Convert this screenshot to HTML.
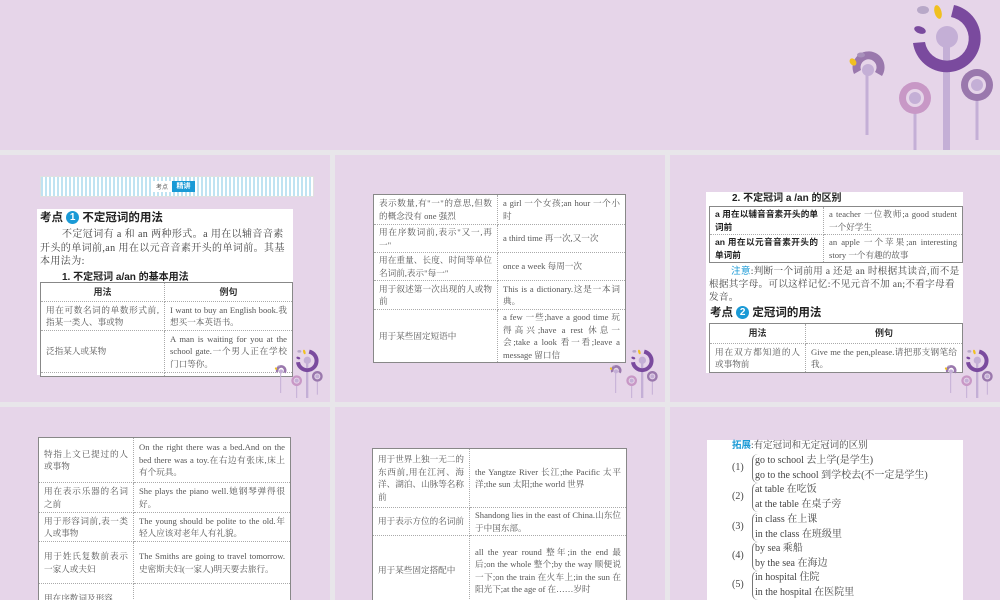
<!DOCTYPE html>
<html><head><meta charset="utf-8"><style>
*{margin:0;padding:0;box-sizing:border-box}
body{width:1000px;height:600px;background:#e8e6ea;position:relative;overflow:hidden;font-family:"Liberation Serif","Noto Serif CJK SC",serif;color:#444}
.s{position:absolute;background:#e6d5e9;overflow:hidden}
.abs{position:absolute}
.w{position:absolute;background:#fff}
table{border-collapse:collapse;position:absolute;background:#fff;font-size:8.6px;line-height:12.5px;color:#555}
td{border:1px dotted #aaa;padding:1px 5px;vertical-align:middle;text-align:justify}
table.t{border:1px solid #888}
th{font-family:"Liberation Sans","Noto Sans CJK SC",sans-serif;font-weight:bold;font-size:9px;border:1px dotted #aaa;color:#333}
.h{font-family:"Liberation Sans","Noto Sans CJK SC",sans-serif;font-weight:bold;color:#222}
.num{display:inline-block;width:13px;height:13px;border-radius:50%;background:#1a9ad6;color:#fff;text-align:center;line-height:13px;font-size:10px;vertical-align:1px}
p{font-size:10px;line-height:13.5px;color:#444}
.deco{position:absolute}
.g{position:absolute;left:62px;font-size:10px;line-height:14.5px;color:#444}
.g .l{position:absolute;left:0;top:7px}
.g .b{position:absolute;left:20px;top:0;border-left:1px solid #777;border-radius:6px 0 0 6px;padding-left:2px;white-space:nowrap;width:220px}
</style></head><body>
<svg width="0" height="0" style="position:absolute"><defs>
<g id="fl">
<rect x="45.5" y="70" width="3" height="65" fill="#c4afd6"/>
<path d="M34 74 A16 16 0 1 1 62 76 L55 72 A8 8 0 1 0 41 70 Z" fill="#9a78ad"/>
<circle cx="48" cy="70" r="6" fill="#c4afd6"/>
<ellipse cx="33" cy="62" rx="3" ry="4" fill="#f0c020" transform="rotate(-40 33 62)"/>
<ellipse cx="41" cy="55" rx="4" ry="2.5" fill="#a890bb"/>
<rect x="93.5" y="98" width="3" height="52" fill="#c4afd6"/>
<circle cx="95" cy="98" r="16" fill="#c898c6"/><circle cx="95" cy="98" r="9" fill="#e6d5e9"/><circle cx="95" cy="98" r="6" fill="#c4afd6"/>
<rect x="155.5" y="85" width="3" height="55" fill="#c4afd6"/>
<circle cx="157" cy="85" r="16" fill="#9a78ad"/><circle cx="157" cy="85" r="9" fill="#e6d5e9"/><circle cx="157" cy="85" r="6" fill="#c4afd6"/>
<rect x="123" y="37" width="7" height="113" fill="#c4afd6"/>
<path d="M93 43 A34 34 0 1 0 134 5 L131 17 A22 22 0 1 1 105 42 Z" fill="#7a4a9e"/>
<circle cx="127" cy="37" r="11" fill="#c4afd6"/>
<ellipse cx="118" cy="12" rx="3.5" ry="7" fill="#f0c020" transform="rotate(-15 118 12)"/>
<ellipse cx="103" cy="10" rx="6" ry="4" fill="#b8a8c8"/>
<ellipse cx="100" cy="30" rx="6" ry="3.5" fill="#7a4a9e" transform="rotate(20 100 30)"/>
</g></defs></svg>

<div class="s" style="left:0;top:0;width:1000px;height:150px">
<svg class="deco" style="left:820px;top:0" width="180" height="150" viewBox="0 0 180 150"><use href="#fl"/></svg>
</div>

<!-- slide 1 -->
<div class="s" style="left:0;top:155px;width:330px;height:247px">
<div class="w" style="left:40px;top:21px;width:274px;height:21px;background:repeating-linear-gradient(90deg,#bfe3f2 0 2px,#fff 2px 4px);border:1px solid #e0e0e0"></div>
<div class="abs" style="left:153px;top:26px;width:42px;height:11px;background:#fff"></div>
<div class="abs h" style="left:156px;top:27px;font-size:6px;color:#555;font-weight:normal">考点</div>
<div class="abs h" style="left:172px;top:26px;width:23px;height:11px;background:#1a9ad6;color:#fff;font-size:7px;text-align:center;line-height:11px">精讲</div>
<div class="w" style="left:37px;top:54px;width:256px;height:166px"></div>
<div class="abs h" style="left:40px;top:55px;font-size:11.5px;line-height:16px">考点 <span class="num">1</span> 不定冠词的用法</div>
<p class="abs" style="left:40px;top:73px;width:252px;text-indent:22px;letter-spacing:.4px">不定冠词有 a 和 an 两种形式。a 用在以辅音音素开头的单词前,an 用在以元音音素开头的单词前。其基本用法为:</p>
<div class="abs h" style="left:62px;top:113px;font-size:10px">1. 不定冠词 a/an 的基本用法</div>
<table class="t" style="left:40px;top:127px;width:253px">
<tr style="height:19px"><th style="width:124px">用法</th><th>例句</th></tr>
<tr style="height:29px"><td>用在可数名词的单数形式前,指某一类人、事或物</td><td>I want to buy an English book.我想买一本英语书。</td></tr>
<tr style="height:42px"><td>泛指某人或某物</td><td>A man is waiting for you at the school gate.一个男人正在学校门口等你。</td></tr>
<tr style="height:4px"><td></td><td></td></tr>
</table>
<svg class="deco" style="left:265px;top:193px" width="60" height="50" viewBox="0 0 180 150"><use href="#fl"/></svg>
</div>

<!-- slide 2 -->
<div class="s" style="left:335px;top:155px;width:330px;height:247px">
<table class="t" style="left:38px;top:39px;width:253px">
<tr style="height:30px"><td style="width:124px">表示数量,有"一"的意思,但数的概念没有 one 强烈</td><td>a girl 一个女孩;an hour 一个小时</td></tr>
<tr style="height:28px"><td>用在序数词前,表示"又一,再一"</td><td>a third time 再一次,又一次</td></tr>
<tr style="height:28px"><td>用在重量、长度、时间等单位名词前,表示"每一"</td><td>once a week 每周一次</td></tr>
<tr style="height:29px"><td>用于叙述第一次出现的人或物前</td><td>This is a dictionary.这是一本词典。</td></tr>
<tr style="height:53px"><td>用于某些固定短语中</td><td>a few 一些;have a good time 玩得高兴;have a rest 休息一会;take a look 看一看;leave a message 留口信</td></tr>
</table>
<svg class="deco" style="left:265px;top:193px" width="60" height="50" viewBox="0 0 180 150"><use href="#fl"/></svg>
</div>

<!-- slide 3 -->
<div class="s" style="left:670px;top:155px;width:330px;height:247px">
<div class="w" style="left:36px;top:37px;width:257px;height:181px"></div>
<div class="abs h" style="left:62px;top:37px;font-size:10px;line-height:14px">2. 不定冠词 a /an 的区别</div>
<table class="t" style="left:39px;top:51px;width:254px">
<tr style="height:28px"><td style="width:114px" class="h">a 用在以辅音音素开头的单词前</td><td>a teacher 一位教师;a good student 一个好学生</td></tr>
<tr style="height:28px"><td class="h">an 用在以元音音素开头的单词前</td><td>an apple 一个苹果;an interesting story 一个有趣的故事</td></tr>
</table>
<p class="abs" style="left:39px;top:110px;width:254px;text-indent:22px;letter-spacing:.3px;font-size:9.6px;line-height:13px"><span style="color:#1a9ad6;font-family:'Liberation Sans','Noto Sans CJK SC',sans-serif">注意</span>:判断一个词前用 a 还是 an 时根据其读音,而不是根据其字母。可以这样记忆:不见元音不加 an;不看字母看发音。</p>
<div class="abs h" style="left:40px;top:150px;font-size:11.5px;line-height:16px">考点 <span class="num">2</span> 定冠词的用法</div>
<table class="t" style="left:39px;top:168px;width:254px">
<tr style="height:20px"><th style="width:96px">用法</th><th>例句</th></tr>
<tr style="height:29px"><td>用在双方都知道的人或事物前</td><td>Give me the pen,please.请把那支钢笔给我。</td></tr>
</table>
<svg class="deco" style="left:265px;top:193px" width="60" height="50" viewBox="0 0 180 150"><use href="#fl"/></svg>
</div>

<!-- slide 4 -->
<div class="s" style="left:0;top:407px;width:330px;height:193px">
<table class="t" style="left:38px;top:30px;width:253px">
<tr style="height:45px"><td style="width:95px">特指上文已提过的人或事物</td><td>On the right there was a bed.And on the bed there was a toy.在右边有张床,床上有个玩具。</td></tr>
<tr style="height:30px"><td>用在表示乐器的名词之前</td><td>She plays the piano well.她钢琴弹得很好。</td></tr>
<tr style="height:29px"><td>用于形容词前,表一类人或事物</td><td>The young should be polite to the old.年轻人应该对老年人有礼貌。</td></tr>
<tr style="height:42px"><td>用于姓氏复数前表示一家人或夫妇</td><td>The Smiths are going to travel tomorrow.史密斯夫妇(一家人)明天要去旅行。</td></tr>
<tr style="height:30px"><td>用在序数词及形容</td><td></td></tr>
</table>
</div>

<!-- slide 5 -->
<div class="s" style="left:335px;top:407px;width:330px;height:193px">
<table class="t" style="left:37px;top:41px;width:255px">
<tr style="height:59px"><td style="width:97px">用于世界上独一无二的东西前,用在江河、海洋、湖泊、山脉等名称前</td><td>the Yangtze River 长江;the Pacific 太平洋;the sun 太阳;the world 世界</td></tr>
<tr style="height:28px"><td>用于表示方位的名词前</td><td>Shandong lies in the east of China.山东位于中国东部。</td></tr>
<tr style="height:70px"><td>用于某些固定搭配中</td><td>all the year round 整年;in the end 最后;on the whole 整个;by the way 顺便说一下;on the train 在火车上;in the sun 在阳光下;at the age of 在……岁时</td></tr>
</table>
</div>

<!-- slide 6 -->
<div class="s" style="left:670px;top:407px;width:330px;height:193px">
<div class="w" style="left:37px;top:33px;width:256px;height:170px"></div>
<div class="abs" style="left:62px;top:32px;font-size:9.5px;line-height:14px;color:#444;width:240px"><span style="color:#1a9ad6;font-family:'Liberation Sans','Noto Sans CJK SC',sans-serif;font-weight:bold">拓展</span>:有定冠词和无定冠词的区别</div>
<div class="g" style="top:47px"><span class="l">(1)</span><div class="b">go to school 去上学(是学生)<br>go to the school 到学校去(不一定是学生)</div></div>
<div class="g" style="top:76px"><span class="l">(2)</span><div class="b">at table 在吃饭<br>at the table 在桌子旁</div></div>
<div class="g" style="top:106px"><span class="l">(3)</span><div class="b">in class 在上课<br>in the class 在班级里</div></div>
<div class="g" style="top:135px"><span class="l">(4)</span><div class="b">by sea 乘船<br>by the sea 在海边</div></div>
<div class="g" style="top:164px"><span class="l">(5)</span><div class="b">in hospital 住院<br>in the hospital 在医院里</div></div>
</div>
</body></html>
